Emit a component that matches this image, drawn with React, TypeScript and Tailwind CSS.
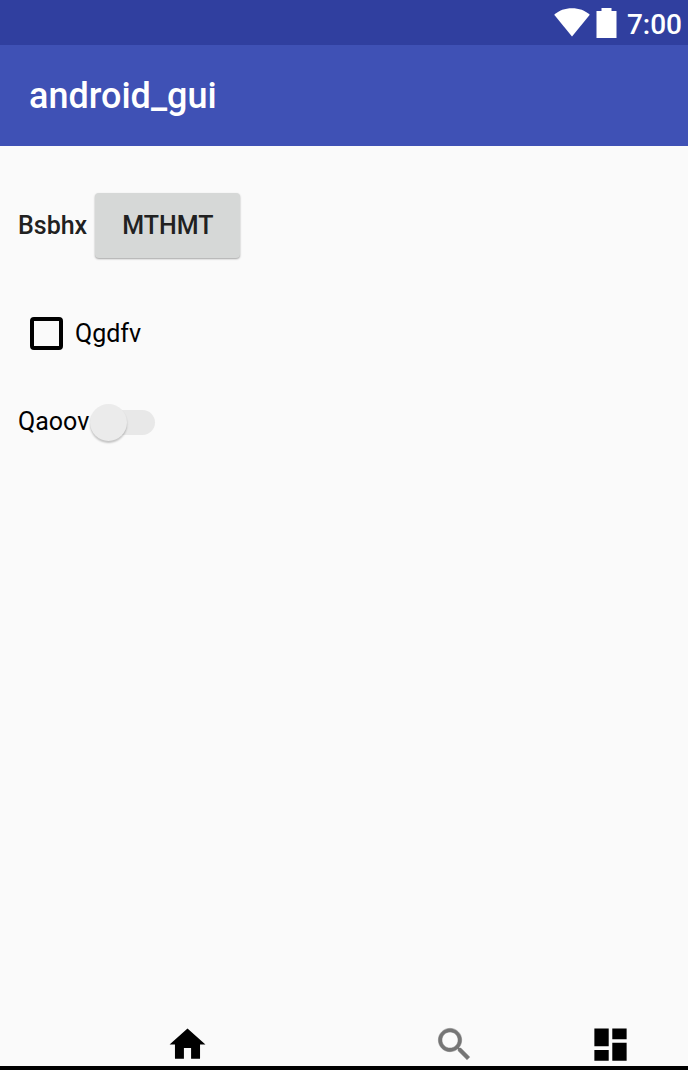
import { useState } from 'react';

function StatusBar() {
  return (
    <div className="flex h-[45px] items-center justify-end bg-[#303f9f] pr-1.5 text-white">
      <svg className="mr-1.5 h-[30px] w-9" viewBox="0 0 36 30" fill="currentColor" aria-hidden="true">
        <path d="M18 28.500 .2 6.700C5 2.300 11 .2 18 .2s13 2.100 17.800 6.500z" />
      </svg>
      <svg className="mr-2.5 h-[30px] w-[21px]" viewBox="0 0 21 30" aria-hidden="true">
        <path d="M5.500 0h10v3H20.500v27H.5V3h5z" fill="#fff" />
      </svg>
      <time className="pt-1 text-[28px] leading-8 font-medium">7:00</time>
    </div>
  );
}

type Tab = 'Home' | 'Search' | 'Dashboard';

const tabs: { name: Tab; path: string }[] = [
  { name: 'Home', path: 'M10 20v-6h4v6h5v-8h3L12 3 2 12h3v8z' },
  {
    name: 'Search',
    path: 'M15.500 14h-.79l-.28-.27C15.410 12.590 16 11.110 16 9.500 16 5.910 13.090 3 9.500 3S3 5.910 3 9.500 5.910 16 9.500 16c1.610 0 3.090-.59 4.230-1.570l.27.28v.79l5 4.990L20.490 19l-4.990-5zm-6 0C7.010 14 5 11.990 5 9.500S7.010 5 9.500 5 14 7.010 14 9.500 11.990 14 9.500 14z',
  },
  { name: 'Dashboard', path: 'M3 13h8V3H3v10zm0 8h8v-6H3v6zm10 0h8V11h-8v10zm0-18v6h8V3h-8z' },
];

export default function App() {
  const [checked, setChecked] = useState(false);
  const [on, setOn] = useState(false);

  return (
    <div className="flex min-h-screen flex-col bg-[#fafafa] font-[Roboto,sans-serif] text-[25px] leading-8 text-black">
      <StatusBar />
      <header className="flex h-[101px] items-center bg-[#3f51b5] px-[29px]">
        <h1 className="text-[36px] leading-10 font-medium text-white">android_gui</h1>
      </header>

      <main className="flex grow flex-col items-start px-[18px] pt-[47px]">
        <div className="flex items-center gap-2 font-medium text-[#212121]">
          <span>Bsbhx</span>
          <button
            type="button"
            className="h-[65px] rounded-[4px] bg-[#d6d8d7] px-[27px] shadow-[0_1px_2px_rgba(0,0,0,0.35)]"
          >
            MTHMT
          </button>
        </div>

        <label className="mt-[59px] ml-3 flex items-center gap-3">
          <input
            type="checkbox"
            checked={checked}
            onChange={(e) => setChecked(e.target.checked)}
            className="size-[33px] appearance-none rounded-[4px] border-4 border-black checked:bg-black"
          />
          <span>Qgdfv</span>
        </label>

        <label className="mt-14 flex items-center">
          <span>Qaoov</span>
          <input
            type="checkbox"
            role="switch"
            checked={on}
            onChange={(e) => setOn(e.target.checked)}
            className="ml-[7px] flex h-[25px] w-[59px] appearance-none items-center rounded-full bg-[#e8e8e8] before:-ml-1.5 before:size-[37px] before:shrink-0 before:rounded-full before:bg-[#ebebeb] before:shadow-[0_2px_2px_rgba(0,0,0,0.22)] checked:before:ml-[28px]"
          />
        </label>
      </main>

      <nav className="grid grid-cols-[1fr_23%_22.5%] border-b-4 border-black">
        {tabs.map((tab) => (
          <button
            key={tab.name}
            type="button"
            aria-label={tab.name}
            className={tab.name === 'Search' ? 'flex justify-center text-[#757575]' : 'flex justify-center text-black'}
          >
            <svg className="size-[43px]" viewBox="0 0 24 24" fill="currentColor" aria-hidden="true">
              <path
                d={tab.path}
                stroke="currentColor"
                strokeWidth={tab.name === 'Search' ? 0.3 : 0}
              />
            </svg>
          </button>
        ))}
      </nav>
    </div>
  );
}
